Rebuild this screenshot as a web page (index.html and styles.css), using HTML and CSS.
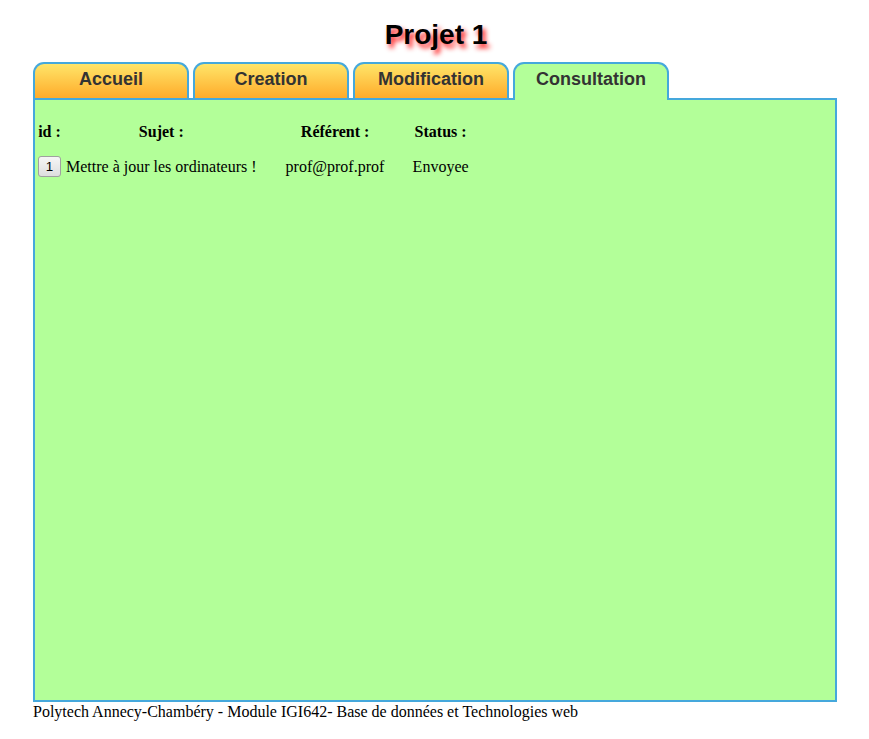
FILE: index.html
```html
<!DOCTYPE html>
<html lang="fr">
<head>
<meta charset="utf-8">
<title>Projet 1</title>
<link rel="stylesheet" href="styles.css">
</head>
<body>
<h1 class="title">Projet 1</h1>
<ul class="tabs">
  <li class="tab">Accueil</li>
  <li class="tab">Creation</li>
  <li class="tab">Modification</li>
  <li class="tab tab-active">Consultation</li>
</ul>
<div class="panel">
  <table class="list">
    <thead>
      <tr>
        <th class="c-id">id :</th>
        <th class="c-sujet">Sujet :</th>
        <th class="c-ref">Référent :</th>
        <th class="c-status">Status :</th>
      </tr>
    </thead>
    <tbody>
      <tr class="row">
        <td class="c-id"><button class="id-btn" type="button">1</button></td>
        <td class="c-sujet">Mettre à jour les ordinateurs !</td>
        <td class="c-ref">prof@prof.prof</td>
        <td class="c-status">Envoyee</td>
      </tr>
    </tbody>
  </table>
</div>
<div class="footer">Polytech Annecy-Chambéry - Module IGI642- Base de données et Technologies web</div>
</body>
</html>
```
FILE: styles.css
```css
body {
  margin: 8px;
  font-family: "Liberation Serif", "Times New Roman", serif;
  font-size: 16px;
  color: #000;
  background: #fff;
}

.title {
  margin: 11px 0 11px;
  padding-left: 3px;
  text-align: center;
  font-family: "Liberation Sans", Arial, sans-serif;
  font-weight: bold;
  font-size: 28px;
  line-height: 32px;
  color: #000;
  text-shadow: 3px 4px 5px #ff1a1a;
}

.tabs {
  list-style: none;
  margin: 0 0 0 25px;
  padding: 0;
  display: flex;
  gap: 4px;
  align-items: flex-start;
}

.tab {
  position: relative;
  width: 152px;
  height: 29px;
  padding-top: 5px;
  border: 2px solid #45a8dc;
  border-bottom: none;
  border-radius: 11px 11px 0 0;
  background: linear-gradient(#ffe569, #ffab2a);
  text-align: center;
  font-family: "Liberation Sans", Arial, sans-serif;
  font-weight: bold;
  font-size: 18px;
  line-height: 20px;
  color: #333;
}

.tab-active {
  height: 31px;
  margin-bottom: -2px;
  background: #b3ff99;
  z-index: 1;
}

.panel {
  margin-left: 25px;
  width: 800px;
  height: 600px;
  border: 2px solid #45a8dc;
  background: #b3ff99;
}

.list {
  margin-top: 20px;
  border-collapse: separate;
  border-spacing: 2px;
}

.list th,
.list td {
  padding: 1px;
  white-space: nowrap;
  line-height: 18px;
}

.list th {
  font-weight: bold;
  text-align: center;
}

.list td {
  text-align: left;
}

.row td {
  padding-top: 12px;
}

.list .c-sujet {
  padding-left: 2px;
  width: 190px;
}

.list .c-ref {
  padding-left: 26px;
  width: 99px;
}

.list .c-status {
  padding-left: 25px;
  width: 56px;
}

.id-btn {
  font-family: "Liberation Sans", Arial, sans-serif;
  font-size: 13.33px;
  padding: 1px 6px;
  margin: 0;
  color: #000;
  background: linear-gradient(#f6f6f6, #dedede);
  border: 1px solid #a0a0a0;
  border-radius: 3px;
  height: 21px;
  width: 23px;
}

.footer {
  margin-left: 25px;
  padding-top: 1px;
  line-height: 18px;
}
```
